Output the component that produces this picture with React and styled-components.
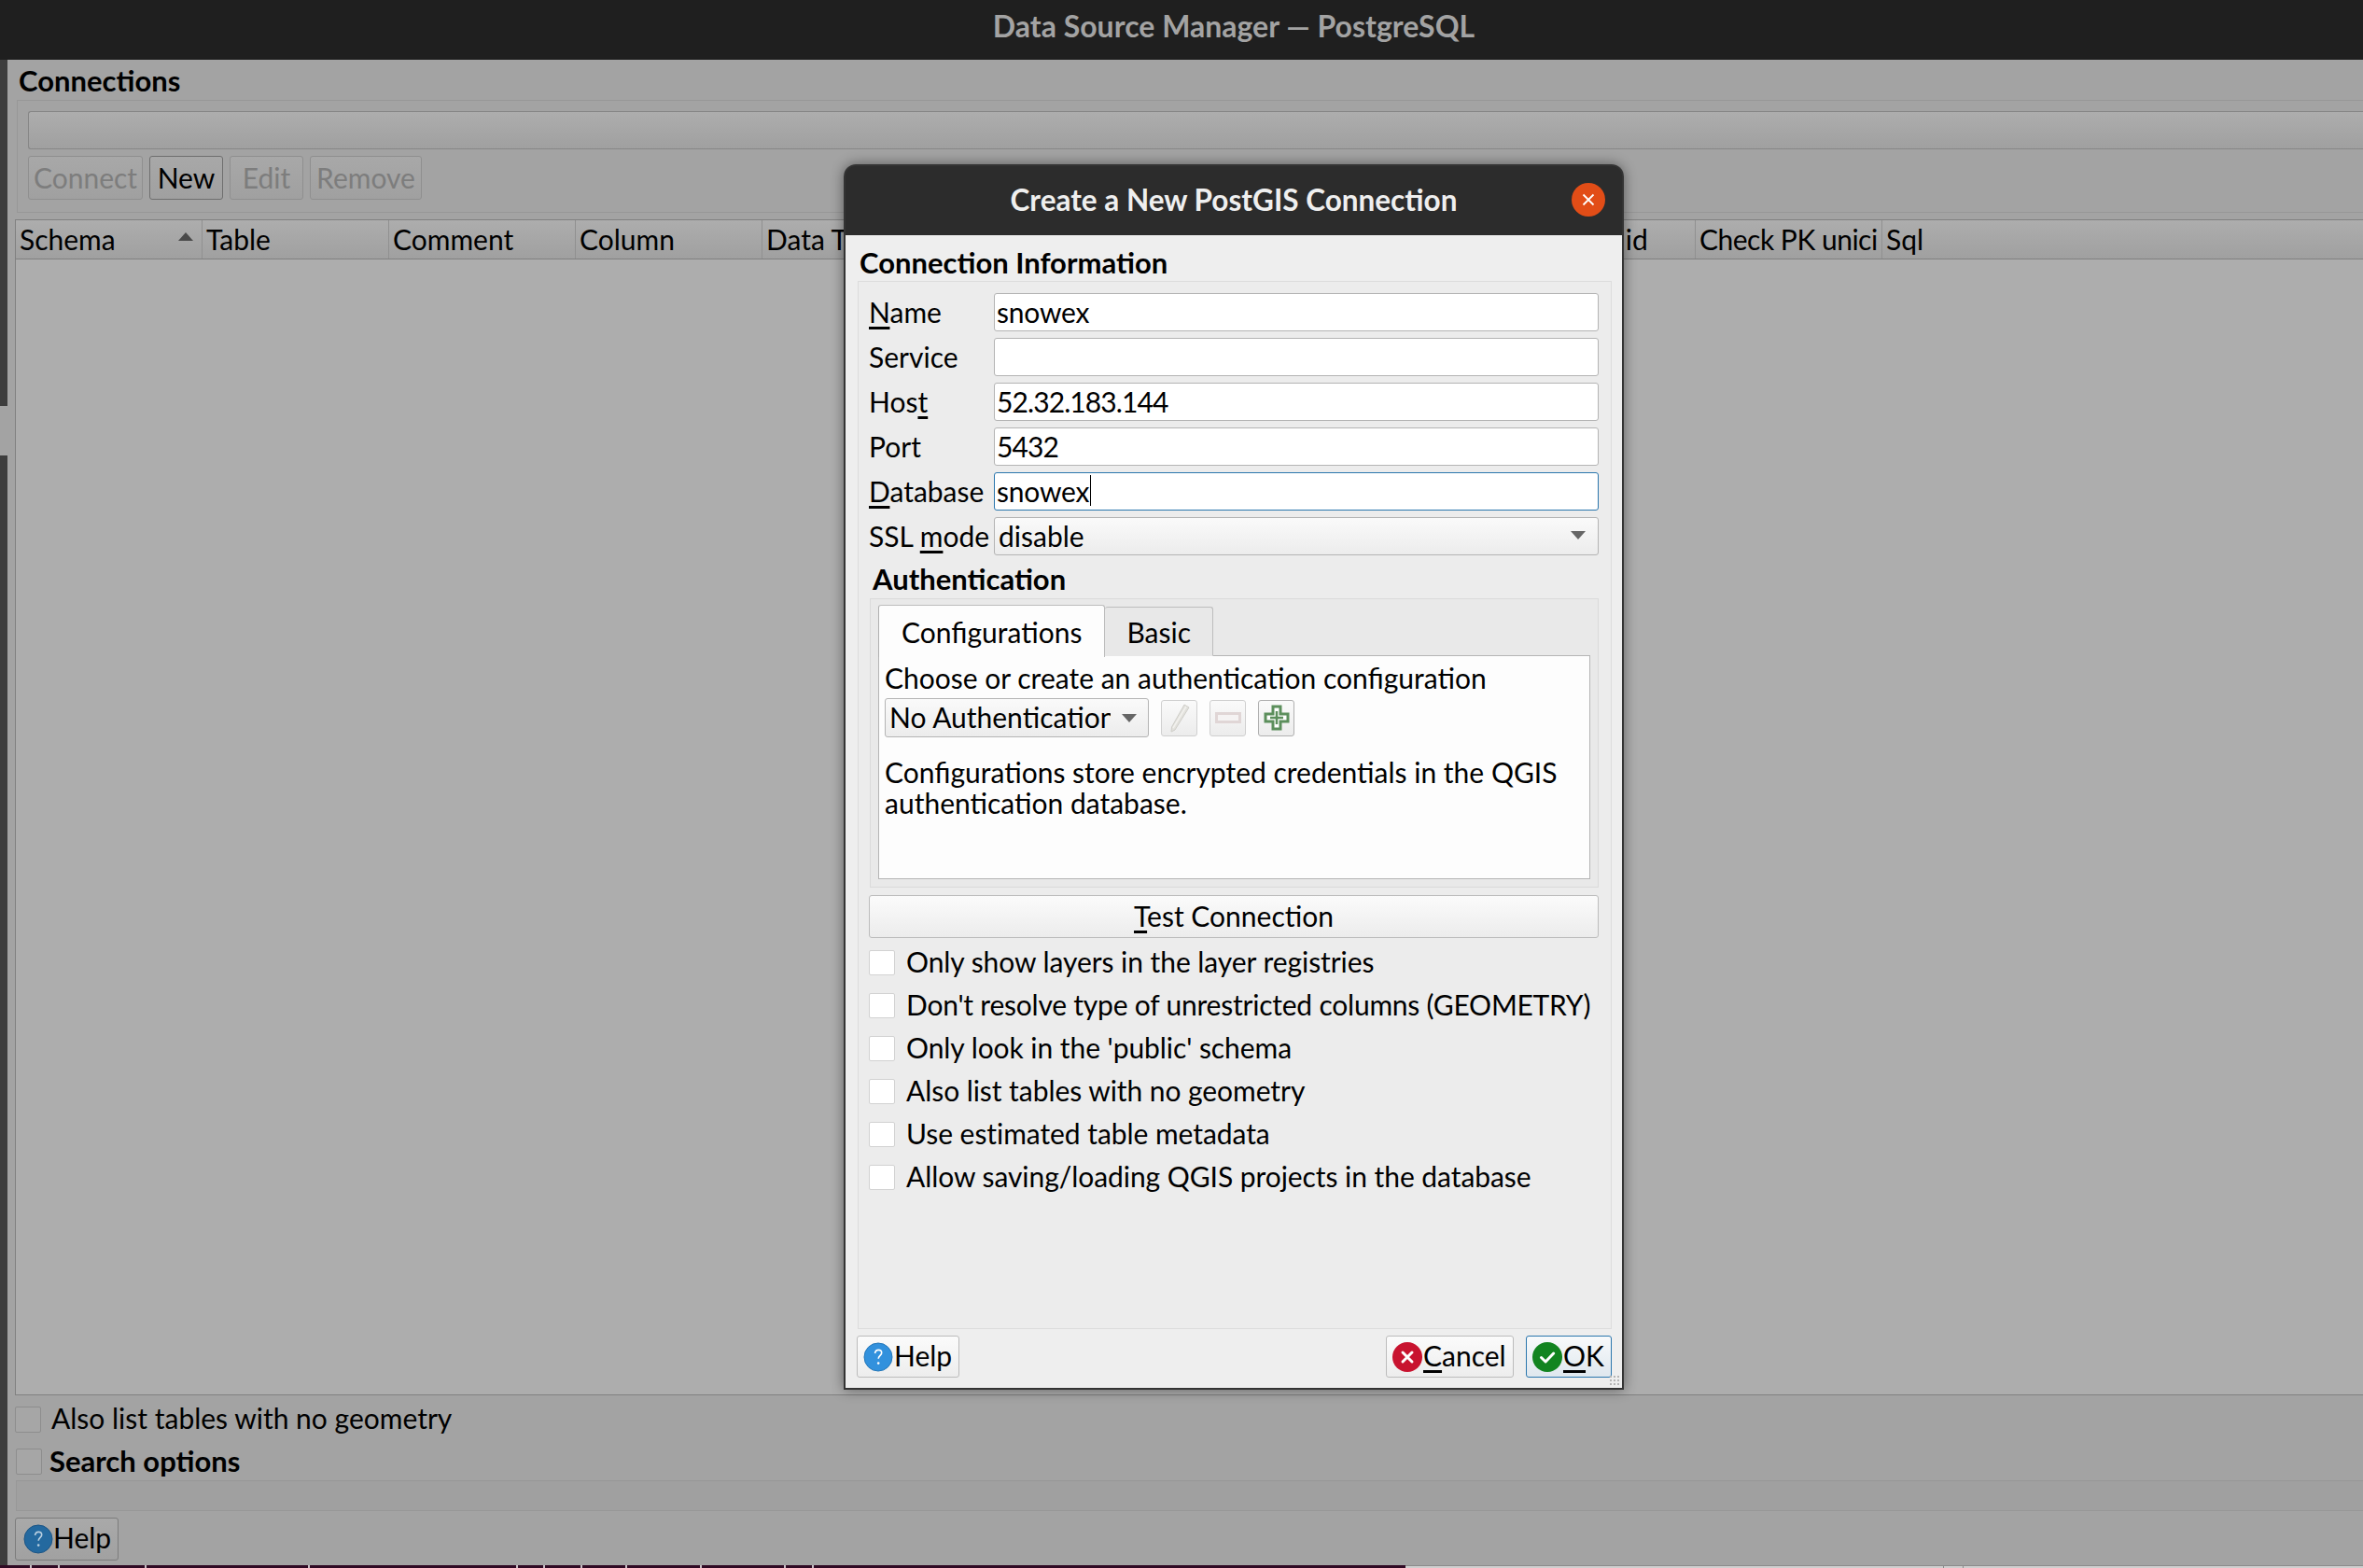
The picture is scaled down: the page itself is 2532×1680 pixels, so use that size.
import styled, { createGlobalStyle } from "styled-components";

const GlobalStyle = createGlobalStyle`
  html, body {
    margin: 0;
    padding: 0;
    height: 1680px;
    overflow: hidden;
    background: #a3a3a3;
  }
  * {
    box-sizing: border-box;
  }
`;

const COLUMNS = [
  "Schema",
  "Table",
  "Comment",
  "Column",
  "Data Type",
  "Spatial Type",
  "SRID",
  "Feature id",
  "Select at id",
  "Check PK unici",
  "Sql",
];

const OPTIONS = [
  "Only show layers in the layer registries",
  "Don't resolve type of unrestricted columns (GEOMETRY)",
  "Only look in the 'public' schema",
  "Also list tables with no geometry",
  "Use estimated table metadata",
  "Allow saving/loading QGIS projects in the database",
];

const TICKS = [32, 62, 155, 330, 553, 582, 622, 670, 750, 840, 870];

function HelpIcon({ dim }) {
  return (
    <svg width="32" height="32" viewBox="0 0 32 32">
      <circle cx="16" cy="16" r="15" fill={dim ? "#24699f" : "#3291dd"} stroke={dim ? "#1c5585" : "#2477b8"} />
      <path d="M12.5 12c.4-2.4 2-3.6 3.8-3.6 2 0 3.4 1.3 3.4 3.1 0 2.6-3.5 3.2-3.5 6.2" fill="none" stroke={dim ? "#b9cfe0" : "#fff"} strokeWidth="1.6" />
      <circle cx="16.2" cy="22.6" r="1.3" fill={dim ? "#b9cfe0" : "#fff"} />
    </svg>
  );
}

function CancelIcon() {
  return (
    <svg width="32" height="32" viewBox="0 0 32 32">
      <circle cx="16" cy="16" r="16" fill="#c8132f" />
      <path d="M11 11l10 10M21 11L11 21" stroke="#fff" strokeWidth="3" strokeLinecap="round" />
    </svg>
  );
}

function OkIcon() {
  return (
    <svg width="32" height="32" viewBox="0 0 32 32">
      <circle cx="16" cy="16" r="16" fill="#128420" />
      <path d="M9.5 16.5l4.6 4.5 8.6-9" fill="none" stroke="#fff" strokeWidth="3" strokeLinecap="round" strokeLinejoin="round" />
    </svg>
  );
}

function App() {
  return (
    <Page>
      <GlobalStyle />
      <TitleBar>Data Source Manager — PostgreSQL</TitleBar>
      <Desktop>
        <LeftStrip>
          <StripPart $height={371} />
          <StripGap />
          <StripPart $height={1189} />
        </LeftStrip>
        <MainColumn>
          <SectionTitle>Connections</SectionTitle>
          <GroupBox>
            <ConnectionCombo />
            <ButtonRow>
              <ToolButton $width={123} disabled>Connect</ToolButton>
              <ToolButton $width={79} $active>New</ToolButton>
              <ToolButton $width={79} disabled>Edit</ToolButton>
              <ToolButton $width={120} disabled>Remove</ToolButton>
            </ButtonRow>
          </GroupBox>
          <TableArea>
            <TableHeader>
              {COLUMNS.map((name, i) => (
                <HeaderCell key={name} $tight={name.startsWith("Check")}>
                  {name}
                  {i === 0 && <SortArrow />}
                </HeaderCell>
              ))}
            </TableHeader>
            <TableBody />
          </TableArea>
          <BottomCheck>
            <DimCheckbox />
            <RaisedText>Also list tables with no geometry</RaisedText>
          </BottomCheck>
          <SearchCheck>
            <DimCheckbox />
            <SearchLabel>Search options</SearchLabel>
          </SearchCheck>
          <SearchFrame />
          <MainHelp>
            <HelpIcon dim />
            <RaisedText>Help</RaisedText>
          </MainHelp>
        </MainColumn>
      </Desktop>
      <BottomEdge>
        <TerminalStrip>
          {TICKS.map((x) => (
            <Tick key={x} style={{ left: x }} />
          ))}
        </TerminalStrip>
        <NextWindow>
          <NextWindowCell />
        </NextWindow>
      </BottomEdge>

      <Dialog>
        <DialogTitle>
          Create a New PostGIS Connection
          <CloseButton>
            <svg width="14" height="14" viewBox="0 0 14 14">
              <path d="M1.5 1.5l11 11M12.5 1.5l-11 11" stroke="#fff" strokeWidth="1.8" />
            </svg>
          </CloseButton>
        </DialogTitle>
        <DialogBody>
          <DialogHeading>Connection Information</DialogHeading>
          <InfoFrame>
            <FormGrid>
              <FieldLabel><Mnemonic>N</Mnemonic>ame</FieldLabel>
              <Field>snowex</Field>
              <FieldLabel>Service</FieldLabel>
              <Field />
              <FieldLabel>Hos<Mnemonic>t</Mnemonic></FieldLabel>
              <Field $numeric>52.32.183.144</Field>
              <FieldLabel>Port</FieldLabel>
              <Field $numeric>5432</Field>
              <FieldLabel><Mnemonic>D</Mnemonic>atabase</FieldLabel>
              <Field $focused>snowex<Caret /></Field>
              <FieldLabel>SSL <Mnemonic>m</Mnemonic>ode</FieldLabel>
              <SslCombo>
                disable
                <ComboArrow />
              </SslCombo>
            </FormGrid>
            <AuthHeading>Authentication</AuthHeading>
            <AuthFrame>
              <Tabs>
                <Tab $active>Configurations</Tab>
                <Tab>Basic</Tab>
              </Tabs>
              <TabPane>
                <PaneLine>Choose or create an authentication configuration</PaneLine>
                <AuthRow>
                  <AuthCombo>
                    <AuthComboText>No Authentication</AuthComboText>
                    <ComboArrow />
                  </AuthCombo>
                  <IconButton>
                    <svg width="24" height="32" viewBox="0 0 24 32">
                      <path d="M17 2l5 3L7 29l-4 2 .5-5z" fill="#e2e1dc" stroke="#cfcec9" />
                      <path d="M19 4L5 27" stroke="#f2f1ee" strokeWidth="1.5" />
                    </svg>
                  </IconButton>
                  <IconButton>
                    <svg width="28" height="12" viewBox="0 0 28 12">
                      <rect x="1.5" y="1.5" width="25" height="9" fill="#f5f3f3" stroke="#e0d6d6" strokeWidth="3" />
                    </svg>
                  </IconButton>
                  <IconButton $enabled>
                    <svg width="28" height="28" viewBox="0 0 28 28">
                      <path d="M10 2h8v8h8v8h-8v8h-8v-8H2v-8h8z" fill="#fff" stroke="#5c8f5c" strokeWidth="3" />
                      <path d="M14 7v14M7 14h14" stroke="#5c8f5c" strokeWidth="2.5" />
                    </svg>
                  </IconButton>
                </AuthRow>
                <PaneNote>
                  Configurations store encrypted credentials in the QGIS
                  <br />
                  authentication database.
                </PaneNote>
              </TabPane>
            </AuthFrame>
            <TestButton><Mnemonic>T</Mnemonic>est Connection</TestButton>
            <OptionList>
              {OPTIONS.map((text) => (
                <OptionRow key={text} $tight={text.includes("GEOMETRY")}>
                  <Checkbox />
                  <RaisedText>{text}</RaisedText>
                </OptionRow>
              ))}
            </OptionList>
          </InfoFrame>
          <DialogFooter>
            <FooterButton $width={110}>
              <HelpIcon />
              <RaisedText>Help</RaisedText>
            </FooterButton>
            <FooterSpacer />
            <FooterButton $width={137}>
              <CancelIcon />
              <RaisedText><Mnemonic>C</Mnemonic>ancel</RaisedText>
            </FooterButton>
            <FooterButton $width={92} $default>
              <OkIcon />
              <RaisedText><Mnemonic>O</Mnemonic>K</RaisedText>
            </FooterButton>
          </DialogFooter>
          <SizeGrip />
        </DialogBody>
      </Dialog>
    </Page>
  );
}

const Page = styled.div`
  position: relative;
  width: 2532px;
  height: 1680px;
  overflow: hidden;
  display: flex;
  flex-direction: column;
  font-family: Lato, "Noto Sans", sans-serif;
  font-size: 30px;
  color: #000;
  background: #a3a3a3;
`;

const TitleBar = styled.div`
  height: 64px;
  flex: none;
  display: flex;
  align-items: center;
  justify-content: center;
  padding-bottom: 10px;
  padding-left: 112px;
  background: #1f1f1f;
  color: #a3a3a3;
  font-weight: 700;
  font-size: 32px;
`;

const Desktop = styled.div`
  flex: 1;
  min-height: 0;
  display: flex;
`;

const LeftStrip = styled.div`
  width: 8px;
  flex: none;
  display: flex;
  flex-direction: column;
`;

const StripPart = styled.div`
  height: ${(p) => p.$height}px;
  background: #3d3d3d;
`;

const StripGap = styled.div`
  height: 53px;
`;

const MainColumn = styled.div`
  flex: 1;
  min-width: 0;
  display: flex;
  flex-direction: column;
`;

const SectionTitle = styled.div`
  height: 43px;
  padding: 3px 0 0 12px;
  font-weight: 700;
  font-size: 31px;
  line-height: 38px;
`;

const GroupBox = styled.div`
  height: 121px;
  margin-left: 10px;
  padding: 11px 0 0 11px;
  border: 1px solid #979797;
  border-right: none;
  display: flex;
  flex-direction: column;
  gap: 7px;
`;

const ConnectionCombo = styled.div`
  height: 41px;
  border: 1px solid #868686;
  border-right: none;
  border-radius: 3px 0 0 3px;
  background: linear-gradient(#adadad, #a0a0a0);
`;

const ButtonRow = styled.div`
  display: flex;
  gap: 7px;
`;

const ToolButton = styled.button`
  width: ${(p) => p.$width}px;
  height: 47px;
  padding: 0 0 2px;
  font: inherit;
  color: ${(p) => (p.disabled ? "#7d7d7d" : "#000")};
  background: linear-gradient(#a8a8a8, #a0a0a0);
  border: 1px solid ${(p) => (p.$active ? "#6f6f6f" : "#8f8f8f")};
  border-radius: 3px;
`;

const TableArea = styled.div`
  margin: 7px 0 0 8px;
  height: 1260px;
  display: flex;
  flex-direction: column;
  border-left: 1px solid #808080;
  border-bottom: 1px solid #808080;
`;

const TableHeader = styled.div`
  height: 43px;
  flex: none;
  display: flex;
  border-top: 1px solid #808080;
  border-bottom: 1px solid #808080;
  background: linear-gradient(#adadad, #a0a0a0);
`;

const HeaderCell = styled.div`
  position: relative;
  width: 200px;
  flex: none;
  padding-left: 4px;
  line-height: 40px;
  letter-spacing: ${(p) => (p.$tight ? "-0.5px" : "0")};
  white-space: nowrap;
  overflow: hidden;
  border-right: 1px solid #909090;

  &:last-child {
    border-right: none;
  }
`;

const SortArrow = styled.span`
  position: absolute;
  top: 13px;
  left: 174px;
  width: 0;
  height: 0;
  border-left: 8px solid transparent;
  border-right: 8px solid transparent;
  border-bottom: 9px solid #4a4a4a;
`;

const TableBody = styled.div`
  flex: 1;
  background: #adadad;
`;

const RaisedText = styled.span`
  display: block;
  padding-bottom: 4px;
`;

const BottomCheck = styled.div`
  margin: 12px 0 0 8px;
  height: 28px;
  display: flex;
  align-items: center;
  gap: 11px;
`;

const SearchCheck = styled.div`
  margin: 17px 0 0 9px;
  height: 28px;
  display: flex;
  align-items: center;
  gap: 8px;
`;

const SearchLabel = styled.span`
  padding-bottom: 3px;
  font-weight: 700;
  font-size: 31px;
`;

const DimCheckbox = styled.span`
  width: 28px;
  height: 28px;
  flex: none;
  background: #a6a6a6;
  border: 1px solid #8d8d8d;
  border-radius: 2px;
`;

const SearchFrame = styled.div`
  margin: 6px 0 0 9px;
  height: 33px;
  border: 1px solid #979797;
  border-right: none;
  background: #a0a0a0;
`;

const MainHelp = styled.button`
  margin: 7px 0 0 8px;
  width: 111px;
  height: 46px;
  padding: 0 0 0 8px;
  display: flex;
  align-items: center;
  gap: 0;
  font: inherit;
  color: #000;
  background: linear-gradient(#a9a9a9, #a1a1a1);
  border: 1px solid #7c7c7c;
  border-radius: 3px;
`;

const BottomEdge = styled.div`
  height: 3px;
  flex: none;
  display: flex;
`;

const TerminalStrip = styled.div`
  position: relative;
  width: 1506px;
  flex: none;
  background: #300a24;
`;

const Tick = styled.span`
  position: absolute;
  top: 0;
  width: 2px;
  height: 3px;
  background: #c9bfc6;
`;

const NextWindow = styled.div`
  flex: 1;
  padding-left: 576px;
  background: #cfcfcf;
  border-top: 1px solid #8c8c8c;
`;

const NextWindowCell = styled.div`
  width: 22px;
  height: 100%;
  border-left: 1px solid #8c8c8c;
  border-right: 1px solid #8c8c8c;
`;

const Dialog = styled.div`
  position: absolute;
  top: 176px;
  left: 904px;
  width: 836px;
  height: 1313px;
  display: flex;
  flex-direction: column;
  border-radius: 13px 13px 0 0;
  box-shadow: 0 0 14px rgba(0, 0, 0, 0.45);
`;

const DialogTitle = styled.div`
  position: relative;
  height: 76px;
  flex: none;
  display: flex;
  align-items: center;
  justify-content: center;
  padding: 0 0 2px 0;
  background: #2c2c2c;
  border: 2px solid #333;
  border-bottom: none;
  border-radius: 13px 13px 0 0;
  color: #efefef;
  font-weight: 700;
  font-size: 31.5px;
`;

const CloseButton = styled.span`
  position: absolute;
  top: 18px;
  right: 18px;
  width: 36px;
  height: 36px;
  display: flex;
  align-items: center;
  justify-content: center;
  border-radius: 50%;
  background: #e24d17;
`;

const DialogBody = styled.div`
  position: relative;
  flex: 1;
  min-height: 0;
  display: flex;
  flex-direction: column;
  padding: 0 11px 0 13px;
  background: #eeeeee;
  border: 2px solid #333;
  border-top: none;
`;

const DialogHeading = styled.div`
  height: 49px;
  flex: none;
  padding: 10px 0 0 2px;
  font-weight: 700;
  font-size: 31px;
  line-height: 38px;
`;

const InfoFrame = styled.div`
  height: 1123px;
  flex: none;
  padding: 12px 14px 0 12px;
  background: #ececec;
  border: 1px solid #dcdcdc;
`;

const FormGrid = styled.div`
  display: grid;
  grid-template-columns: 133px 648px;
  grid-auto-rows: 41px;
  row-gap: 7px;
  align-items: center;
`;

const FieldLabel = styled.span`
  margin-left: -1px;
  padding-bottom: 2px;
  white-space: nowrap;
`;

const Mnemonic = styled.span`
  text-decoration: underline;
  text-decoration-thickness: 3px;
  text-underline-offset: 4px;
  text-decoration-skip-ink: none;
`;

const Field = styled.div`
  height: 41px;
  padding: 0 0 2px 2px;
  display: flex;
  align-items: center;
  letter-spacing: ${(p) => (p.$numeric ? "-0.9px" : "-0.2px")};
  background: #fff;
  border: 1px solid ${(p) => (p.$focused ? "#2a76ad" : "#b4b4b4")};
  border-radius: 3px;
`;

const Caret = styled.span`
  width: 1px;
  height: 33px;
  margin-left: 1px;
  background: #000;
`;

const SslCombo = styled.div`
  height: 41px;
  padding: 0 13px 2px 4px;
  display: flex;
  align-items: center;
  justify-content: space-between;
  background: linear-gradient(#fafafa, #ececec);
  border: 1px solid #b4b4b4;
  border-radius: 3px;
`;

const ComboArrow = styled.span`
  width: 0;
  height: 0;
  flex: none;
  border-left: 8px solid transparent;
  border-right: 8px solid transparent;
  border-top: 9px solid #666;
`;

const AuthHeading = styled.div`
  height: 46px;
  padding: 6px 0 0 3px;
  font-weight: 700;
  font-size: 31px;
  line-height: 38px;
`;

const AuthFrame = styled.div`
  height: 310px;
  margin-right: -1px;
  padding: 6px 8px 0 8px;
  background: #e9e9e9;
  border: 1px solid #dadada;
`;

const Tabs = styled.div`
  position: relative;
  z-index: 1;
  height: 56px;
  margin-bottom: -2px;
  display: flex;
  align-items: flex-start;
`;

const Tab = styled.div`
  height: ${(p) => (p.$active ? "56px" : "53px")};
  margin-top: ${(p) => (p.$active ? "0" : "2px")};
  padding: 0 ${(p) => (p.$active ? "24px" : "23px")};
  display: flex;
  align-items: center;
  background: ${(p) => (p.$active ? "#fdfdfd" : "#e8e8e8")};
  border: 1px solid #bdbdbd;
  border-bottom: ${(p) => (p.$active ? "none" : "1px solid #e8e8e8")};
  border-left: ${(p) => (p.$active ? "1px solid #b0b0b0" : "none")};
  border-radius: 3px 3px 0 0;
`;

const TabPane = styled.div`
  height: 240px;
  padding: 7px 7px 0 6px;
  background: #fdfdfd;
  border: 1px solid #b5b5b5;
`;

const PaneLine = styled.div`
  line-height: 33px;
`;

const AuthRow = styled.div`
  margin-top: 5px;
  display: flex;
  align-items: center;
  gap: 13px;
`;

const AuthCombo = styled.div`
  width: 283px;
  height: 42px;
  padding: 0 12px 0 4px;
  display: flex;
  align-items: center;
  justify-content: space-between;
  background: linear-gradient(#fafafa, #ececec);
  border: 1px solid #b4b4b4;
  border-radius: 3px;
`;

const AuthComboText = styled.span`
  width: 237px;
  padding-bottom: 2px;
  overflow: hidden;
  white-space: nowrap;
`;

const IconButton = styled.span`
  width: 39px;
  height: 39px;
  display: flex;
  align-items: center;
  justify-content: center;
  background: linear-gradient(#fafafa, #ececec);
  border: 1px solid ${(p) => (p.$enabled ? "#b0b0b0" : "#d0d0d0")};
  border-radius: 3px;
`;

const PaneNote = styled.div`
  margin-top: 21px;
  line-height: 33px;
`;

const TestButton = styled.button`
  display: block;
  width: 782px;
  height: 46px;
  margin: 8px 0 0 -1px;
  padding: 0 0 2px;
  font: inherit;
  color: #000;
  background: linear-gradient(#fbfbfb, #ececec);
  border: 1px solid #bcbcbc;
  border-radius: 3px;
`;

const OptionList = styled.div`
  margin: 13px 0 0 -1px;
  display: flex;
  flex-direction: column;
  gap: 19px;
`;

const OptionRow = styled.div`
  height: 27px;
  display: flex;
  align-items: center;
  gap: 12px;
  letter-spacing: ${(p) => (p.$tight ? "-0.22px" : "-0.06px")};
  white-space: nowrap;
`;

const Checkbox = styled.span`
  width: 28px;
  height: 27px;
  flex: none;
  background: #fff;
  border: 1px solid #d2d2d2;
  border-radius: 2px;
`;

const DialogFooter = styled.div`
  margin: 7px 0 0 -1px;
  display: flex;
  gap: 13px;
`;

const FooterSpacer = styled.div`
  flex: 1;
`;

const FooterButton = styled.button`
  width: ${(p) => p.$width}px;
  height: 45px;
  padding: 0 0 0 6px;
  display: flex;
  align-items: center;
  gap: 1px;
  font: inherit;
  color: #000;
  background: ${(p) =>
    p.$default
      ? "linear-gradient(#f8fafb, #dfe7ee)"
      : "linear-gradient(#fbfbfb, #ededed)"};
  border: 1px solid ${(p) => (p.$default ? "#2a76ad" : "#bcbcbc")};
  border-radius: 3px;
`;

const SizeGrip = styled.span`
  position: absolute;
  right: 2px;
  bottom: 2px;
  width: 12px;
  height: 12px;
  background-image: radial-gradient(#b5b5b5 1px, transparent 1.2px);
  background-size: 4px 4px;
`;

export default App;
